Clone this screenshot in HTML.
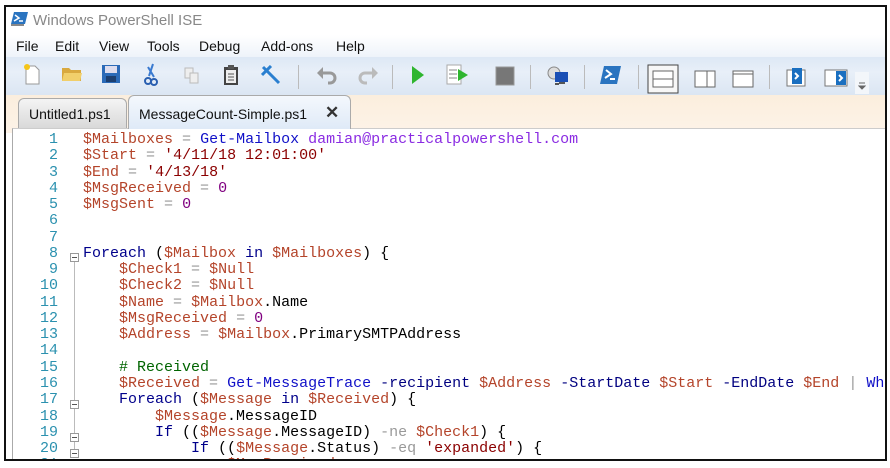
<!DOCTYPE html>
<html><head><meta charset="utf-8"><style>
*{margin:0;padding:0;box-sizing:border-box}
body{width:890px;height:468px;background:#fff;position:relative;overflow:hidden;font-family:"Liberation Sans",sans-serif}
#frame{position:absolute;left:4px;top:5px;width:883px;height:456px;border:2px solid #111;overflow:hidden;background:#fff}
.title{position:absolute;left:0;top:0;width:100%;height:28px;background:#fff;font-size:15px;color:#888;}
.title span{position:absolute;left:27px;top:5px}
.menu{position:absolute;top:28px;left:0;width:100%;height:22px;background:linear-gradient(#fff,#eef3fa);font-size:14px;color:#111}
.menu span{position:absolute;top:3px}
.tb{position:absolute;top:50px;left:0;width:100%;height:38px;background:linear-gradient(#dde8f5,#e8eff8 40%,#dbe6f3)}
.tabs{position:absolute;top:88px;left:0;width:100%;height:38px;background:linear-gradient(#fbeedd,#fdf3e8)}
.tab{position:absolute;height:32px;border:1px solid #aaa;border-bottom:none;border-radius:6px 6px 0 0;font-size:14px;color:#111;padding:7px 0 0 10px}
.ico{position:absolute}
.sep{position:absolute;top:58px;width:1px;height:24px;background:#bbb}
#code{position:absolute;top:121px;left:6px;right:0;bottom:0;background:#fff;border-left:1px solid #aaa;border-top:1px solid #ccc}
pre{position:absolute;font-family:"Liberation Mono",monospace;font-size:15px;line-height:16.27px;white-space:pre}
#ln{left:0;width:45px;text-align:right;color:#2b91af;top:3px}
#src{left:70px;top:3px;color:#000}
.v{color:#b4442a}.s{color:#8b0000}.c{color:#1010c8}.k{color:#00008b}.o{color:#999}.n{color:#800080}.g{color:#006400}.a{color:#8a2be2}.p{color:#000080}
.fold{position:absolute;left:57px;width:9px;height:9px;border:1px solid #999;background:#fff}
.fold:after{content:"";position:absolute;left:1px;top:3px;width:5px;height:1px;background:#555}
.vl{position:absolute;left:61px;width:1px;background:#bbb}
</style></head><body>
<div id="frame">
<div class="title">
<svg class="ico" style="left:5px;top:4px" width="18" height="16"><path d="M3 1h14l-3 12H0z" fill="#2a74c0"/><path d="M4 4l4 3-5 3" stroke="#fff" stroke-width="1.5" fill="none"/><path d="M8 10h4" stroke="#fff" stroke-width="1.5"/><path d="M0 14h13" stroke="#888" stroke-width="2"/></svg>
<span>Windows PowerShell ISE</span></div>
<div class="menu"><span style="left:10px">File</span><span style="left:49px">Edit</span><span style="left:93px">View</span><span style="left:141px">Tools</span><span style="left:193px">Debug</span><span style="left:255px">Add-ons</span><span style="left:330px">Help</span></div>
<div class="tb"></div>
<svg class="ico" style="left:16px;top:56px" width="20" height="22"><path d="M4 3h9l4 4v14H4z" fill="#fff" stroke="#999"/><circle cx="5" cy="4" r="3" fill="#f5c518"/></svg>
<svg class="ico" style="left:55px;top:58px" width="22" height="18"><path d="M1 3h7l2 2h10v11H1z" fill="#d9a93f"/><path d="M3 8h18l-2 8H1z" fill="#f1cf6b"/></svg>
<svg class="ico" style="left:95px;top:57px" width="20" height="20"><rect x="1" y="1" width="18" height="18" fill="#2a6ab8"/><rect x="4" y="2" width="12" height="7" fill="#dde"/><rect x="5" y="12" width="10" height="6" fill="#1c3f70"/></svg>
<svg class="ico" style="left:138px;top:56px" width="14" height="24"><path d="M9 1L5 13M4 4l6 10" stroke="#3a7ad0" stroke-width="2"/><circle cx="4" cy="18" r="3" fill="none" stroke="#2a5fb0" stroke-width="2"/><circle cx="10" cy="19" r="3" fill="none" stroke="#2a5fb0" stroke-width="2"/></svg>
<svg class="ico" style="left:178px;top:60px" width="16" height="18"><rect x="1" y="1" width="8" height="10" fill="#eee" stroke="#bbb"/><rect x="6" y="6" width="8" height="10" fill="#eee" stroke="#bbb"/></svg>
<svg class="ico" style="left:217px;top:57px" width="16" height="22"><rect x="1" y="3" width="14" height="18" fill="#444"/><rect x="3" y="6" width="10" height="13" fill="#eee"/><path d="M5 10h6M5 13h6M5 16h6" stroke="#555"/><rect x="5" y="1" width="6" height="4" fill="#555"/></svg>
<svg class="ico" style="left:255px;top:58px" width="22" height="20"><path d="M2 2l16 16" stroke="#2a7fd0" stroke-width="3"/><path d="M1 10L10 1" stroke="#2a7fd0" stroke-width="3"/></svg>
<div class="sep" style="left:292px"></div>
<svg class="ico" style="left:310px;top:58px" width="22" height="20"><path d="M4 8h10a5 5 0 010 10h-2" stroke="#999" stroke-width="3" fill="none"/><path d="M1 8l6-6v12z" fill="#999"/></svg>
<svg class="ico" style="left:351px;top:58px" width="22" height="20"><path d="M18 8H8a5 5 0 000 10h2" stroke="#bbb" stroke-width="3" fill="none"/><path d="M21 8l-6-6v12z" fill="#bbb"/></svg>
<div class="sep" style="left:386px"></div>
<svg class="ico" style="left:405px;top:58px" width="14" height="20"><path d="M1 1l12 9-12 9z" fill="#2fb52f"/></svg>
<svg class="ico" style="left:440px;top:57px" width="24" height="22"><rect x="1" y="1" width="14" height="19" fill="#fff" stroke="#aaa"/><path d="M3 6h8M3 10h8M3 14h8" stroke="#888"/><path d="M12 5l10 6-10 6z" fill="#2fb52f"/></svg>
<svg class="ico" style="left:489px;top:59px" width="20" height="20"><rect x="1" y="1" width="18" height="18" fill="#777" stroke="#999"/></svg>
<div class="sep" style="left:524px"></div>
<svg class="ico" style="left:541px;top:58px" width="22" height="22"><circle cx="7" cy="8" r="6" fill="#ddd" stroke="#888"/><rect x="8" y="7" width="13" height="10" fill="#1a4fb5"/><path d="M12 18h6M8 19h4" stroke="#555" stroke-width="2"/></svg>
<div class="sep" style="left:578px"></div>
<svg class="ico" style="left:594px;top:58px" width="22" height="20"><path d="M4 1h17l-4 18H0z" fill="#2a74c0"/><path d="M6 5l5 4-6 4" stroke="#fff" stroke-width="2" fill="none"/><path d="M10 14h5" stroke="#fff" stroke-width="2"/></svg>
<div class="sep" style="left:632px"></div>
<svg class="ico" style="left:641px;top:57px" width="32" height="30"><rect x="1" y="1" width="30" height="28" fill="#f7f7f7" stroke="#444"/><rect x="6" y="7" width="20" height="16" fill="#fff" stroke="#666"/><path d="M6 15h20" stroke="#666"/></svg>
<svg class="ico" style="left:688px;top:63px" width="22" height="18"><rect x="1" y="1" width="20" height="16" fill="#fff" stroke="#666"/><path d="M13 1v16" stroke="#666"/></svg>
<svg class="ico" style="left:726px;top:63px" width="22" height="18"><rect x="1" y="1" width="20" height="16" fill="#fff" stroke="#666"/><path d="M1 4h20" stroke="#666"/></svg>
<div class="sep" style="left:763px"></div>
<svg class="ico" style="left:780px;top:59px" width="22" height="22"><rect x="1" y="4" width="18" height="16" fill="#fff" stroke="#777"/><rect x="6" y="2" width="10" height="16" fill="#1a6fc0"/><path d="M9 7l3 3-3 3" stroke="#fff" stroke-width="2" fill="none"/></svg>
<svg class="ico" style="left:818px;top:62px" width="24" height="18"><rect x="1" y="1" width="22" height="16" fill="#fff" stroke="#777"/><rect x="12" y="2" width="10" height="14" fill="#1a6fc0"/><path d="M15 6l3 3-3 3" stroke="#fff" stroke-width="2" fill="none"/></svg>
<div style="position:absolute;left:849px;top:65px;width:14px;height:22px;background:#f3f6fa"></div>
<svg class="ico" style="left:852px;top:75px" width="8" height="8"><path d="M1 1h6M1 4l3 3 3-3z" stroke="#666" fill="#666"/></svg>
<div class="tabs"></div>
<div class="tab" style="left:12px;top:91px;width:109px;height:31px;background:linear-gradient(#f4f4f4,#d8d8d8)">Untitled1.ps1</div>
<div class="tab" style="left:122px;width:223px;top:88px;height:34px;padding-top:10px;background:linear-gradient(#f4f8fd,#dfeaf7);z-index:2">MessageCount-Simple.ps1 <span style="position:absolute;left:196px;top:7px;font-size:17px;font-weight:bold;color:#333">✕</span></div>
<div id="code">
<pre id="ln">1
2
3
4
5
6
7
8
9
10
11
12
13
14
15
16
17
18
19
20
21</pre>
<div class="vl" style="top:129px;height:200px"></div>
<div class="fold" style="top:124px"></div>
<div class="fold" style="top:271px"></div>
<div class="fold" style="top:304px"></div>
<div class="fold" style="top:320px"></div>
<pre id="src"><span class="v">$Mailboxes</span> <span class="o">=</span> <span class="c">Get-Mailbox</span> <span class="a">damian@practicalpowershell.com</span>
<span class="v">$Start</span> <span class="o">=</span> <span class="s">'4/11/18 12:01:00'</span>
<span class="v">$End</span> <span class="o">=</span> <span class="s">'4/13/18'</span>
<span class="v">$MsgReceived</span> <span class="o">=</span> <span class="n">0</span>
<span class="v">$MsgSent</span> <span class="o">=</span> <span class="n">0</span>


<span class="k">Foreach</span> (<span class="v">$Mailbox</span> <span class="k">in</span> <span class="v">$Mailboxes</span>) {
    <span class="v">$Check1</span> <span class="o">=</span> <span class="v">$Null</span>
    <span class="v">$Check2</span> <span class="o">=</span> <span class="v">$Null</span>
    <span class="v">$Name</span> <span class="o">=</span> <span class="v">$Mailbox</span>.Name
    <span class="v">$MsgReceived</span> <span class="o">=</span> <span class="n">0</span>
    <span class="v">$Address</span> <span class="o">=</span> <span class="v">$Mailbox</span>.PrimarySMTPAddress

    <span class="g"># Received</span>
    <span class="v">$Received</span> <span class="o">=</span> <span class="c">Get-MessageTrace</span> <span class="p">-recipient</span> <span class="v">$Address</span> <span class="p">-StartDate</span> <span class="v">$Start</span> <span class="p">-EndDate</span> <span class="v">$End</span> <span class="o">|</span> <span class="c">Where</span>
    <span class="k">Foreach</span> (<span class="v">$Message</span> <span class="k">in</span> <span class="v">$Received</span>) {
        <span class="v">$Message</span>.MessageID
        <span class="k">If</span> ((<span class="v">$Message</span>.MessageID) <span class="o">-ne</span> <span class="v">$Check1</span>) {
            <span class="k">If</span> ((<span class="v">$Message</span>.Status) <span class="o">-eq</span> <span class="s">'expanded'</span>) {
                <span class="v">$MsgReceived</span></pre>
</div>
</div>
</body></html>
